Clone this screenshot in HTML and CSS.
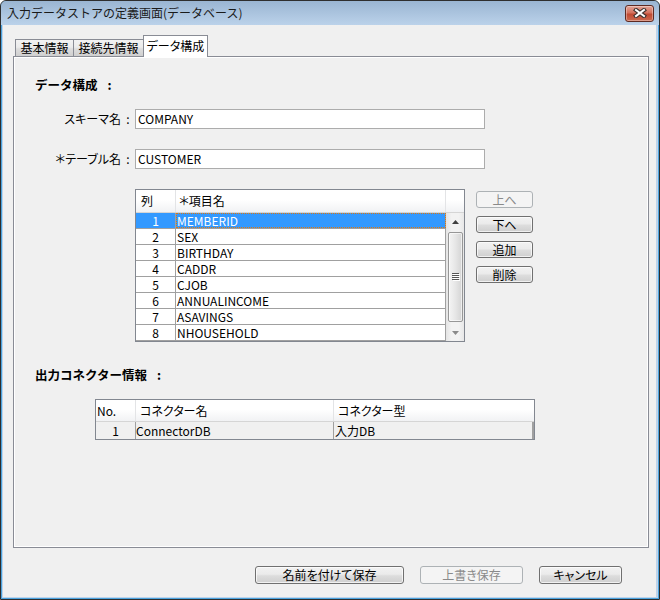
FILE: index.html
```html
<!DOCTYPE html>
<html lang="ja">

<head>
    <meta charset="UTF-8">
    <title>入力データストアの定義画面(データベース)</title>
    <link rel="stylesheet" href="styles.css">
</head>

<body>
    <div class="window">
        <div class="titlebar">
            <span class="title">入力データストアの定義画面(データベース)</span>
            <span class="close">
                <svg width="14" height="10" viewBox="0 0 14 10">
                    <path d="M3 2 L11 8 M11 2 L3 8" stroke="#40332f" stroke-width="4.2" stroke-linecap="square" fill="none"/>
                    <path d="M3 2 L11 8 M11 2 L3 8" stroke="#ffffff" stroke-width="2" stroke-linecap="square" fill="none"/>
                </svg>
            </span>
        </div>

        <div class="client">
            <div class="tabs">
                <div class="tab tab-basic">基本情報</div>
                <div class="tab tab-conn">接続先情報</div>
                <div class="tab tab-data active">データ構成</div>
            </div>

            <div class="panel">
                <div class="heading">データ構成<span class="heading-colon">:</span></div>

                <div class="fields">
                    <div class="label">スキーマ名</div>
                    <div class="colon">:</div>
                    <div class="input">COMPANY</div>
                    <div class="label">＊テーブル名</div>
                    <div class="colon">:</div>
                    <div class="input">CUSTOMER</div>
                </div>

                <div class="columns">
                    <div class="list">
                        <div class="list-head">
                            <div class="lh-no">列</div>
                            <div class="lh-name">＊項目名</div>
                        </div>
                        <div class="list-body">
                            <div class="rows">
                                <div class="row sel"><div class="c-no">1</div><div class="c-name">MEMBERID</div></div>
                                <div class="row"><div class="c-no">2</div><div class="c-name">SEX</div></div>
                                <div class="row"><div class="c-no">3</div><div class="c-name">BIRTHDAY</div></div>
                                <div class="row"><div class="c-no">4</div><div class="c-name">CADDR</div></div>
                                <div class="row"><div class="c-no">5</div><div class="c-name">CJOB</div></div>
                                <div class="row"><div class="c-no">6</div><div class="c-name">ANNUALINCOME</div></div>
                                <div class="row"><div class="c-no">7</div><div class="c-name">ASAVINGS</div></div>
                                <div class="row"><div class="c-no">8</div><div class="c-name">NHOUSEHOLD</div></div>
                            </div>
                            <div class="scrollbar">
                                <div class="sb-arrow">
                                    <svg width="7" height="4" viewBox="0 0 7 4"><polygon points="0,4 7,4 3.5,0" fill="#404040"/></svg>
                                </div>
                                <div class="sb-thumb">
                                    <svg width="8" height="8" viewBox="0 0 8 8">
                                        <path d="M0 0.5 H7 M0 2.5 H7 M0 4.5 H7 M0 6.5 H7" stroke="#555" stroke-width="1"/>
                                        <path d="M1 1.5 H8 M1 3.5 H8 M1 5.5 H8 M1 7.5 H8" stroke="#fff" stroke-width="1"/>
                                    </svg>
                                </div>
                                <div class="sb-space"></div>
                                <div class="sb-arrow">
                                    <svg width="7" height="4" viewBox="0 0 7 4"><polygon points="0,0 7,0 3.5,4" fill="#8a8a8a"/></svg>
                                </div>
                            </div>
                        </div>
                    </div>

                    <div class="side">
                        <button class="btn side-btn" disabled>上へ</button>
                        <button class="btn side-btn">下へ</button>
                        <button class="btn side-btn">追加</button>
                        <button class="btn side-btn">削除</button>
                    </div>
                </div>

                <div class="heading heading-out">出力コネクター情報<span class="heading-colon">:</span></div>

                <div class="ctable">
                    <div class="ct-head">
                        <div class="k-no">No.</div>
                        <div class="k-name">コネクター名</div>
                        <div class="k-type">コネクター型</div>
                    </div>
                    <div class="ct-row">
                        <div class="k-no">1</div>
                        <div class="k-name">ConnectorDB</div>
                        <div class="k-type">入力DB</div>
                    </div>
                </div>
            </div>

            <div class="footer">
                <button class="btn btn-save-as">名前を付けて保存</button>
                <button class="btn btn-save" disabled>上書き保存</button>
                <button class="btn btn-cancel">キャンセル</button>
            </div>
        </div>
    </div>
</body>

</html>
```

FILE: styles.css
```css
* {
    box-sizing: border-box;
}

body {
    margin: 0;
    font-family: "Noto Sans CJK JP", sans-serif;
    font-size: 12px;
    color: #000;
    background: #fff;
    font-feature-settings: "palt";
}

.window {
    width: 660px;
    height: 600px;
    border: 1px solid #2e2e2e;
    border-radius: 6px 6px 0 0;
    background: #bfd4ea;
    box-shadow: inset 0 0 0 1px #4aa2dd;
    display: flex;
    flex-direction: column;
    overflow: hidden;
}

.titlebar {
    flex: none;
    height: 24px;
    display: flex;
    align-items: center;
    justify-content: space-between;
    padding: 0 5px 0 6px;
    background: linear-gradient(#9ab5d2, #bbd2ea);
    border-radius: 5px 5px 0 0;
}

.title {
    font-size: 12px;
    line-height: 14px;
    color: #1a1a1a;
    font-feature-settings: normal;
}

.close {
    width: 29px;
    height: 17px;
    border: 1px solid #5e2a22;
    border-radius: 3px;
    background: linear-gradient(#e3a496 0%, #d4725e 45%, #c04a33 55%, #cc6a50 100%);
    box-shadow: inset 0 0 0 1px rgba(255, 255, 255, .35);
    display: flex;
    align-items: center;
    justify-content: center;
}

.client {
    flex: none;
    height: 572px;
    margin: 0 3px 2px 2px;
    padding: 10px 0 0 10px;
    background: #f0f0f0;
}

/* tabs */

.tabs {
    display: flex;
    align-items: flex-end;
    height: 22px;
    margin-bottom: -1px;
    padding-left: 2px;
    position: relative;
    z-index: 1;
}

.tab {
    height: 17px;
    margin-bottom: 1px;
    border: 1px solid #898c95;
    border-bottom: none;
    background: linear-gradient(#f2f2f2 0%, #ebebeb 45%, #dddddd 55%, #cfcfcf 100%);
    text-align: center;
    line-height: 15px;
    font-feature-settings: normal;
}

.tab + .tab {
    margin-left: -1px;
}

.tab-basic {
    width: 59px;
}

.tab-conn {
    width: 71px;
}

.tab-data {
    width: 65px;
}

.tab.active {
    height: 22px;
    margin-bottom: 0;
    background: #fff;
    line-height: 19px;
    font-feature-settings: "palt";
}

.panel {
    width: 636px;
    height: 492px;
    border: 1px solid #898c95;
    background: #f0f0f0;
    box-shadow: inset 0 0 0 1px #fff;
}

.heading {
    margin-top: 21px;
    padding-left: 21px;
    font-size: 12.5px;
    font-weight: bold;
    line-height: 14px;
    font-feature-settings: normal;
}

.heading-colon {
    margin-left: 10px;
}

.heading-out {
    margin-top: 26px;
}

/* schema / table fields */

.fields {
    display: grid;
    grid-template-columns: 107px 14px 350px;
    grid-auto-rows: 20px;
    row-gap: 20px;
    margin-top: 17px;
}

.label {
    text-align: right;
    line-height: 20px;
}

.colon {
    text-align: center;
    line-height: 20px;
}

.input {
    border: 1px solid #acacac;
    background: #fff;
    padding-left: 2px;
    line-height: 18px;
}

/* column list */

.columns {
    display: flex;
    align-items: flex-start;
    margin-top: 20px;
    padding-left: 121px;
}

.list {
    width: 330px;
    border: 1px solid #828790;
    background: #fff;
}

.list-head {
    display: flex;
    height: 23px;
    border-bottom: 1px solid #d5d5d5;
    background: linear-gradient(#ffffff 0%, #ffffff 45%, #f1f2f4 100%);
    line-height: 22px;
}

.lh-no {
    width: 40px;
    padding-left: 5px;
    border-right: 1px solid #e3e4e6;
}

.lh-name {
    width: 270px;
    padding-left: 3px;
    border-right: 1px solid #e3e4e6;
}

.list-body {
    display: flex;
}

.rows {
    width: 310px;
}

.row {
    display: flex;
    height: 16px;
    border-bottom: 1px solid #a0a0a0;
    line-height: 15px;
}

.c-no {
    width: 40px;
    text-align: center;
    border-right: 1px solid #a0a0a0;
}

.c-name {
    width: 270px;
    padding-left: 1px;
    border-right: 1px solid #a0a0a0;
}

.row.sel {
    background: #3399ff;
    color: #fff;
}

.row.sel .c-name {
    outline: 1px dotted #e0780f;
    outline-offset: -1px;
}

.scrollbar {
    width: 18px;
    height: 128px;
    display: flex;
    flex-direction: column;
    background: linear-gradient(to right, #e4e4e4, #f2f2f2 30%, #f2f2f2 70%, #e8e8e8);
}

.sb-arrow {
    height: 17px;
    display: flex;
    align-items: center;
    justify-content: center;
}

.sb-thumb {
    height: 90px;
    margin: 2px 1px 0 2px;
    border: 1px solid #979797;
    border-radius: 2px;
    background: linear-gradient(to right, #f4f4f4, #e6e6e6 50%, #d4d4d4);
    box-shadow: inset 0 0 0 1px rgba(255, 255, 255, .6);
    display: flex;
    align-items: center;
    justify-content: center;
}

.sb-space {
    flex: 1;
}

/* buttons */

.btn {
    padding: 0;
    border: 1px solid #707070;
    border-radius: 3px;
    background: linear-gradient(#f2f2f2 0%, #ebebeb 45%, #dddddd 55%, #cfcfcf 100%);
    box-shadow: inset 0 0 0 1px rgba(255, 255, 255, .7);
    font: inherit;
    line-height: 15px;
    color: #000;
    text-align: center;
}

.btn:disabled {
    border-color: #adb2b5;
    background: #f4f4f4;
    box-shadow: none;
    color: #8a8a8a;
}

.side {
    display: flex;
    flex-direction: column;
    gap: 8px;
    margin-left: 11px;
    padding-top: 2px;
}

.side-btn {
    width: 57px;
    height: 17px;
}

/* connector table */

.ctable {
    width: 440px;
    margin: 17px 0 0 81px;
    border: 1px solid #828790;
    background: #f0f0f0;
}

.ct-head {
    display: flex;
    height: 22px;
    border-bottom: 1px solid #d5d5d5;
    background: linear-gradient(#ffffff 0%, #ffffff 45%, #f1f2f4 100%);
    line-height: 21px;
}

.ct-head .k-no {
    width: 40px;
    padding-left: 1px;
    border-right: 1px solid #e3e4e6;
}

.ct-head .k-name {
    width: 198px;
    padding-left: 4px;
    border-right: 1px solid #e3e4e6;
}

.ct-head .k-type {
    width: 200px;
    padding-left: 4px;
}

.ct-row {
    display: flex;
    height: 17px;
    line-height: 17px;
}

.ct-row .k-no {
    width: 40px;
    text-align: center;
    border-right: 1px solid #a0a0a0;
}

.ct-row .k-name {
    width: 198px;
    border-right: 1px solid #a0a0a0;
}

.ct-row .k-type {
    width: 200px;
    padding-left: 1px;
    border-right: 2px solid #a0a0a0;
}

/* footer */

.footer {
    display: flex;
    justify-content: flex-end;
    gap: 16px;
    margin-top: 18px;
    padding-right: 34px;
}

.footer .btn {
    height: 18px;
    line-height: 16px;
}

.btn-save-as {
    width: 149px;
}

.btn-save {
    width: 103px;
}

.btn-cancel {
    width: 83px;
}
```
